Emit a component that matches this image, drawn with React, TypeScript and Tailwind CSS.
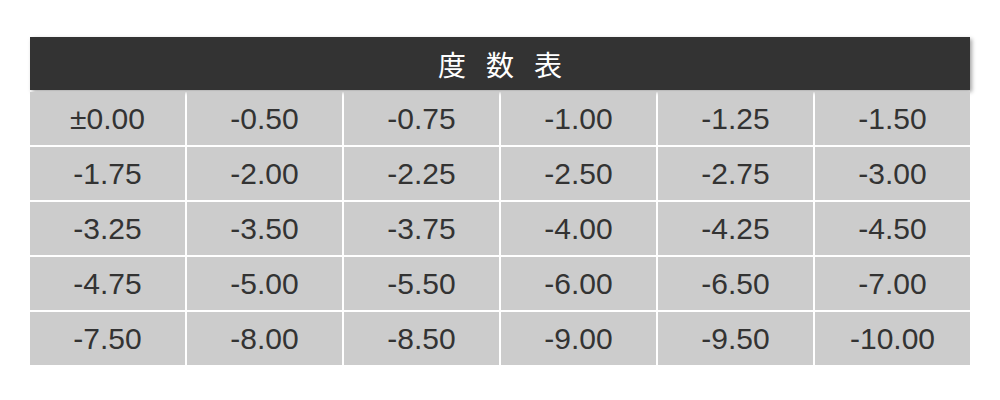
const rows = [
  ["±0.00", "-0.50", "-0.75", "-1.00", "-1.25", "-1.50"],
  ["-1.75", "-2.00", "-2.25", "-2.50", "-2.75", "-3.00"],
  ["-3.25", "-3.50", "-3.75", "-4.00", "-4.25", "-4.50"],
  ["-4.75", "-5.00", "-5.50", "-6.00", "-6.50", "-7.00"],
  ["-7.50", "-8.00", "-8.50", "-9.00", "-9.50", "-10.00"],
]

export default function App() {
  return (
    <div className="w-[1000px] h-[400px] bg-white pt-[37px] px-[30px]">
      {/* 表头 */}
      <div className="h-[53px] bg-[#333333] shadow-[2px_2px_4px_rgba(0,0,0,0.35)] flex items-center justify-center gap-[20px] text-white text-[28px] font-['Noto_Sans_CJK_JP',sans-serif] leading-none">
        <span>度</span>
        <span>数</span>
        <span>表</span>
      </div>

      {/* 度数 */}
      <div className="mt-[2px] grid grid-cols-6 gap-[2px]">
        {rows.flat().map((v) => (
          <div
            key={v}
            className="h-[53px] bg-[#cccccc] flex items-center justify-center text-[30px] text-[#333333] font-['Liberation_Sans',Arial,sans-serif] leading-none"
          >
            {v}
          </div>
        ))}
      </div>
    </div>
  )
}
